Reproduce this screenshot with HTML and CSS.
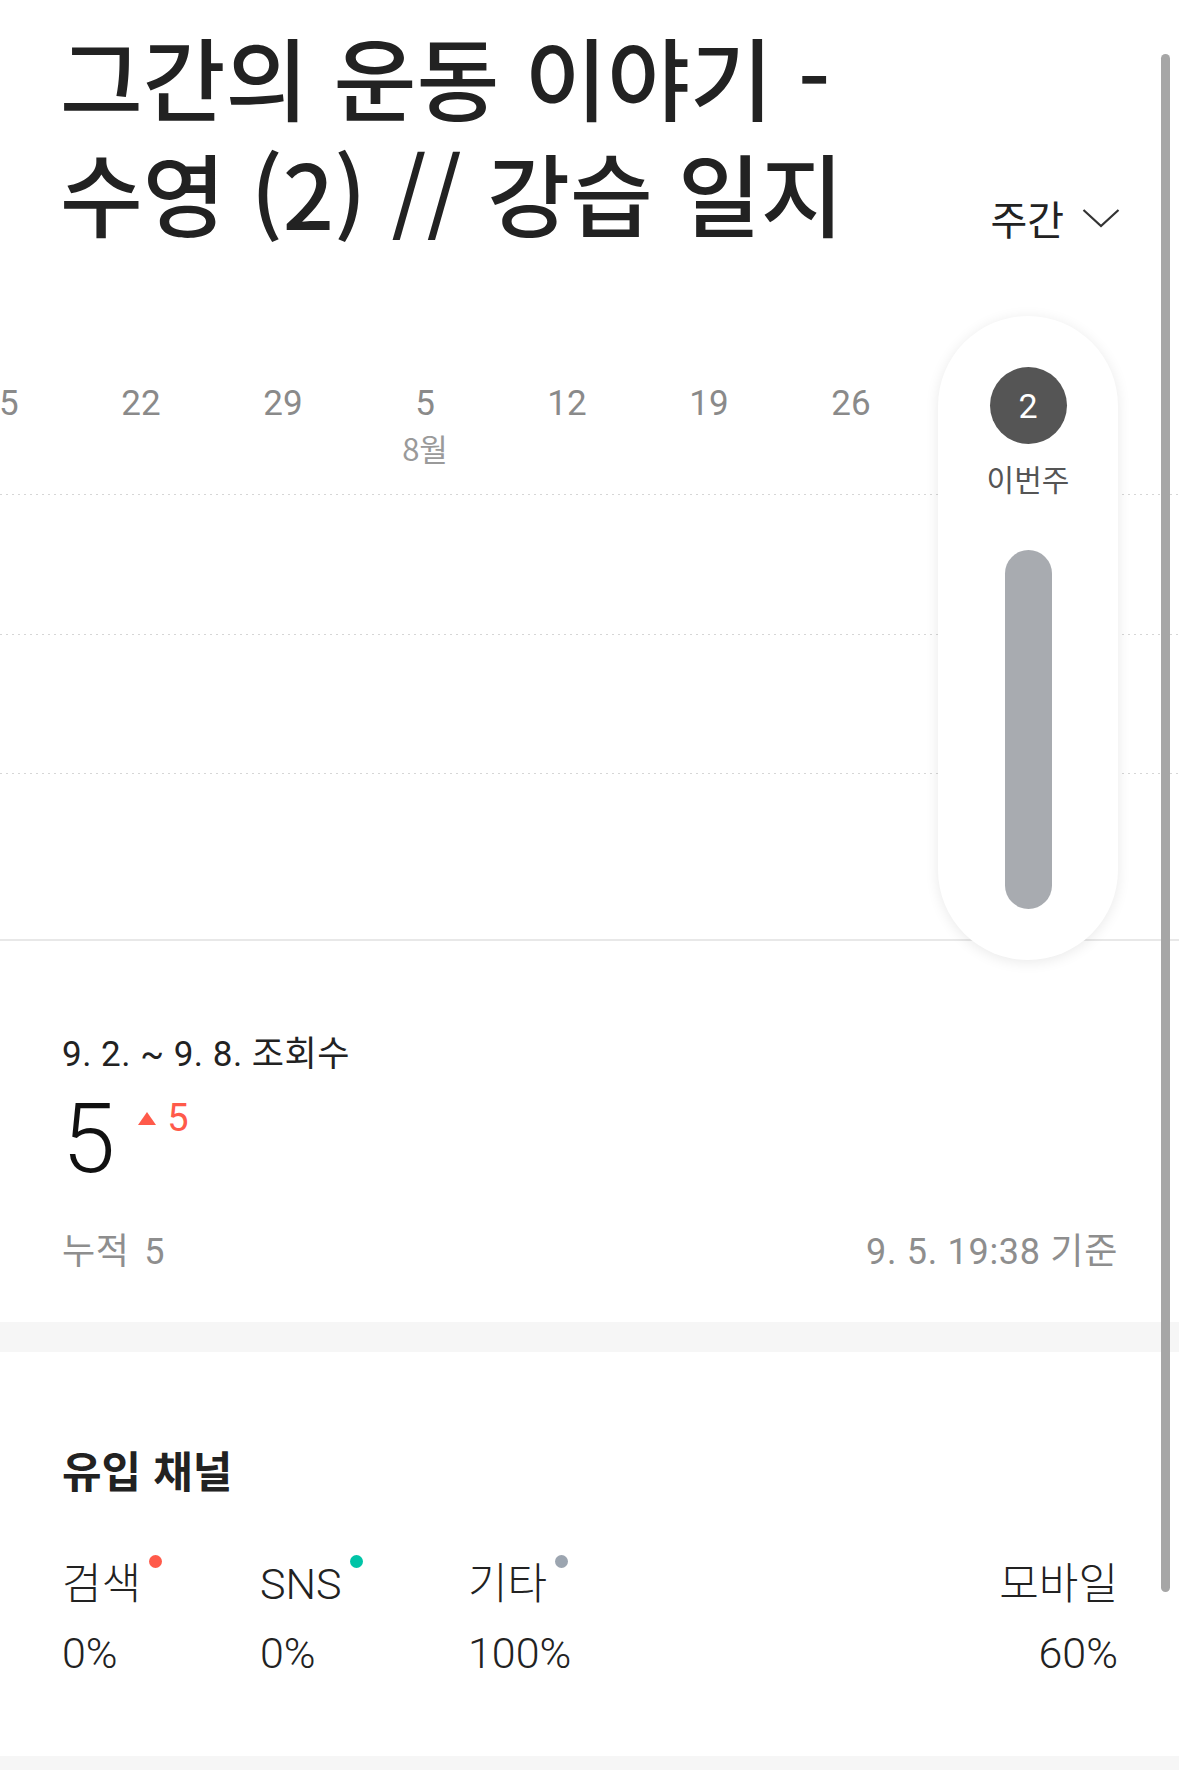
FILE: index.html
```html
<!DOCTYPE html>
<html lang="ko">
<head>
<meta charset="utf-8">
<title>통계</title>
<link rel="stylesheet" href="styles.css">
</head>
<body>
<div class="page">
  <header class="header">
    <h1 class="title"><span class="title-line">그간의 운동 이야기 -</span><span class="title-line">수영 (2) // 강습 일지</span></h1>
    <div class="period">
      <span class="period-text">주간</span>
      <svg class="chevron" width="38" height="20" viewBox="0 0 38 20"><polyline points="1.5,2 19,18 36.5,2" fill="none" stroke="#333" stroke-width="2.2"/></svg>
    </div>
  </header>

  <section class="chart">
    <div class="labels-wrap">
      <div class="labels">
        <div class="col"><span class="day">15</span><span class="month"></span></div>
        <div class="col"><span class="day">22</span><span class="month"></span></div>
        <div class="col"><span class="day">29</span><span class="month"></span></div>
        <div class="col"><span class="day">5</span><span class="month">8월</span></div>
        <div class="col"><span class="day">12</span><span class="month"></span></div>
        <div class="col"><span class="day">19</span><span class="month"></span></div>
        <div class="col"><span class="day">26</span><span class="month"></span></div>
      </div>
    </div>
    <div class="plot">
      <div class="grid-row r1"></div>
      <div class="grid-row r2"></div>
      <div class="grid-row r3"></div>
      <div class="axis"></div>
    </div>
    <div class="current">
      <div class="current-num">2</div>
      <div class="current-label">이번주</div>
      <div class="current-bar"></div>
    </div>
  </section>

  <section class="stats">
    <div class="range">9. 2. ~ 9. 8. 조회수</div>
    <div class="value-row">
      <span class="value">5</span>
      <span class="delta"><span class="tri"></span><span class="delta-num">5</span></span>
    </div>
    <div class="stats-foot">
      <span class="total">누적 5</span>
      <span class="stamp">9. 5. 19:38 기준</span>
    </div>
  </section>

  <div class="band"></div>

  <section class="channels">
    <h2 class="channels-title">유입 채널</h2>
    <div class="channel-list">
      <div class="channel ch-search">
        <div class="ch-label">검색<span class="dot dot-red"></span></div>
        <div class="ch-pct">0%</div>
      </div>
      <div class="channel ch-sns">
        <div class="ch-label">SNS<span class="dot dot-teal"></span></div>
        <div class="ch-pct">0%</div>
      </div>
      <div class="channel">
        <div class="ch-label">기타<span class="dot dot-gray"></span></div>
        <div class="ch-pct">100%</div>
      </div>
      <div class="channel channel-right">
        <div class="ch-label">모바일</div>
        <div class="ch-pct">60%</div>
      </div>
    </div>
  </section>

  <div class="band band-bottom"></div>

  <div class="scrollbar"></div>
</div>
</body>
</html>
```

FILE: styles.css
```css
* { box-sizing: border-box; }
html, body { margin: 0; padding: 0; background: #fff; }
body {
  font-family: Roboto, "Noto Sans CJK KR", sans-serif;
  color: #222;
  width: 1179px;
  overflow: hidden;
}
.page { position: relative; width: 1179px; min-height: 1771px; }

/* header */
.header {
  display: flex;
  justify-content: space-between;
  align-items: flex-end;
  padding: 17px 59px 67px 60px;
}
.title {
  margin: 0;
  display: flex;
  flex-direction: column;
  font-family: "Noto Sans CJK KR", sans-serif;
  font-weight: 500;
  font-size: 90px;
  line-height: 116px;
  color: #222;
  letter-spacing: 0;
}
.title-line { display: block; height: 116px; white-space: nowrap; }
.period {
  display: flex;
  align-items: center;
  gap: 18px;
  margin-bottom: 7px;
  height: 48px;
}
.period-text {
  font-family: "Noto Sans CJK KR", sans-serif;
  font-size: 40px;
  line-height: 48px;
  color: #222;
}
.chevron { display: block; }

/* chart */
.chart { position: relative; }
.labels-wrap { overflow: hidden; padding-bottom: 12px; }
.labels {
  display: flex;
  margin-left: -72px;
  padding-top: 66px;
}
.col {
  width: 142px;
  flex: none;
  display: flex;
  flex-direction: column;
  align-items: center;
}
.day {
  font-size: 35px;
  line-height: 44px;
  color: #8a8a8a;
}
.month {
  min-height: 41px;
  padding-top: 3px;
  font-family: "Noto Sans CJK KR", sans-serif;
  font-size: 31px;
  line-height: 38px;
  color: #9a9a9a;
}
.plot { padding-top: 15px; }
.grid-row {
  background: repeating-linear-gradient(to right, #d6d6d6 0 2px, transparent 2px 6px) top left / 100% 1px no-repeat;
}
.r1 { height: 140px; }
.r2 { height: 139px; }
.r3 { height: 166px; }
.axis { height: 2px; background: #e8e8e8; }

.current {
  position: absolute;
  z-index: 1;
  left: 938px;
  top: 0;
  width: 180px;
  height: 644px;
  border-radius: 90px;
  background: #fff;
  box-shadow: 0 2px 14px rgba(0,0,0,0.09);
  display: flex;
  flex-direction: column;
  align-items: center;
  padding-top: 51px;
}
.current-num {
  width: 77px;
  height: 77px;
  border-radius: 50%;
  background: #555;
  color: #fff;
  font-size: 34px;
  display: flex;
  align-items: center;
  justify-content: center;
}
.current-label {
  margin-top: 14px;
  font-family: "Noto Sans CJK KR", sans-serif;
  font-size: 30px;
  line-height: 40px;
  color: #555;
}
.current-bar {
  margin-top: 52px;
  width: 47px;
  height: 359px;
  border-radius: 24px;
  background: #a8abb0;
}

/* stats */
.stats { padding: 92px 61px 48px 62px; }
.range {
  font-size: 35px;
  line-height: 44px;
  letter-spacing: 0.5px;
  color: #222;
}
.value-row {
  display: flex;
  align-items: flex-start;
  margin-top: 14px;
  height: 96px;
}
.value {
  font-size: 96px;
  line-height: 96px;
  font-weight: 300;
  color: #111;
}
.delta {
  display: flex;
  align-items: center;
  margin-top: 8px;
  margin-left: 23px;
  gap: 11px;
}
.tri {
  width: 0; height: 0;
  border-left: 9px solid transparent;
  border-right: 9px solid transparent;
  border-bottom: 13px solid #ff5a4a;
}
.delta-num {
  font-size: 38px;
  line-height: 38px;
  color: #ff5a4a;
}
.stats-foot {
  display: flex;
  justify-content: space-between;
  margin-top: 43px;
  font-size: 36px;
  line-height: 44px;
  letter-spacing: 0.7px;
  color: #8e8e8e;
}
.total { word-spacing: 5px; }

.band { height: 30px; background: #f6f6f6; }
.band-bottom { height: 14px; }

/* channels */
.channels { padding: 90px 61px 0 62px; height: 404px; }
.channels-title {
  margin: 0;
  font-family: "Noto Sans CJK KR", sans-serif;
  font-weight: 700;
  font-size: 43px;
  line-height: 54px;
  color: #222;
}
.channel-list {
  display: flex;
  margin-top: 62px;
}
.channel { display: flex; flex-direction: column; gap: 17px; }
.ch-search { width: 198px; }
.ch-sns { width: 208px; }
.channel-right { margin-left: auto; align-items: flex-end; }
.ch-label {
  display: flex;
  align-items: flex-start;
  font-size: 43px;
  line-height: 52px;
  font-weight: 300;
  color: #222;
}
.ch-pct {
  font-size: 43px;
  line-height: 52px;
  font-weight: 300;
  color: #222;
}
.dot {
  width: 13px;
  height: 13px;
  border-radius: 50%;
  margin-left: 8px;
  margin-top: -3px;
  flex: none;
}
.dot-red { background: #ff5a4a; }
.dot-teal { background: #00c4a7; }
.dot-gray { background: #9ca5b0; }

.scrollbar {
  position: absolute;
  right: 9px;
  top: 54px;
  width: 9px;
  height: 1538px;
  border-radius: 5px;
  background: #a6a6a6;
}
```
